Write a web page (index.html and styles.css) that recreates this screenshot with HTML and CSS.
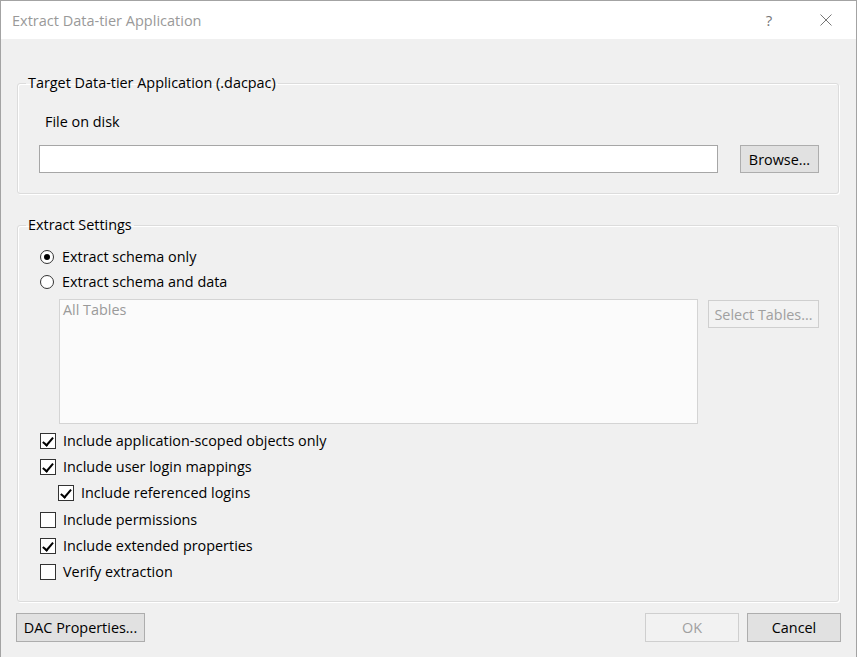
FILE: index.html
```html
<!DOCTYPE html>
<html lang="en">
<head>
  <meta charset="UTF-8">
  <title>Extract Data-tier Application</title>
  <link rel="stylesheet" href="styles.css">
</head>
<body>

<div class="dialog">
  <div class="titlebar">
    <span class="title">Extract Data-tier Application</span>
    <span class="caption-btn help">?</span>
    <span class="caption-btn close">
      <svg width="12" height="12" viewBox="0 0 12 12"><path d="M0.5 0.5 L11.5 11.5 M11.5 0.5 L0.5 11.5" stroke="#777" stroke-width="1" fill="none"/></svg>
    </span>
  </div>

  <div class="content">
    <!-- файл -->
    <fieldset class="group target">
      <legend>Target Data-tier Application (.dacpac)</legend>
      <div class="field-label">File on disk</div>
      <div class="file-row">
        <div class="textbox"></div>
        <button type="button" class="btn browse">Browse...</button>
      </div>
    </fieldset>

    <!-- настройки -->
    <fieldset class="group settings">
      <legend>Extract Settings</legend>
      <label class="row"><span class="radio checked"></span>Extract schema only</label>
      <label class="row"><span class="radio"></span>Extract schema and data</label>
      <div class="tables-row">
        <div class="listbox">All Tables</div>
        <button type="button" class="btn select-tables" disabled>Select Tables...</button>
      </div>
      <div class="checks">
        <label class="row"><span class="check on"></span>Include application-scoped objects only</label>
        <label class="row"><span class="check on"></span>Include user login mappings</label>
        <label class="row sub"><span class="check on"></span>Include referenced logins</label>
        <label class="row"><span class="check"></span>Include permissions</label>
        <label class="row"><span class="check on"></span>Include extended properties</label>
        <label class="row"><span class="check"></span>Verify extraction</label>
      </div>
    </fieldset>

    <div class="footer">
      <button type="button" class="btn dac">DAC Properties...</button>
      <span class="spacer"></span>
      <button type="button" class="btn ok" disabled>OK</button>
      <button type="button" class="btn cancel">Cancel</button>
    </div>
  </div>
</div>

</body>
</html>
```

FILE: styles.css
```css
* {
  box-sizing: border-box;
}
body {
  margin: 0;
  font-family: "Open Sans", "Noto Sans", sans-serif;
  font-size: 14.4px;
  color: #000;
  background: #f0f0f0;
}
.dialog {
  width: 857px;
  height: 657px;
  border: 1px solid #a3a3a3;
  border-bottom: none;
  background: #f0f0f0;
}
.titlebar {
  height: 38px;
  background: #fff;
  display: flex;
  align-items: center;
  padding-left: 11px;
}
.title {
  flex: 1;
  color: #999;
  font-size: 14.5px;
}
.caption-btn {
  width: 46px;
  height: 38px;
  display: flex;
  align-items: center;
  justify-content: center;
}
.help {
  color: #777;
  font-size: 15px;
  margin-right: 11px;
}
.close {
  margin-right: 7px;
}
.content {
  padding: 34px 17px 0 16px;
}
.group {
  margin: 0;
  border: 1px solid #dcdcdc;
  border-radius: 3px;
  box-shadow: inset 1px 1px 0 #fff, 1px 1px 0 #fff;
  min-width: 0;
}
.group legend {
  padding: 0 2px;
  font-size: 14.4px;
  line-height: 20px;
}
.target {
  padding: 19px 19px 20px 21px;
}
.target legend {
  margin-left: -13px;
}
.field-label {
  margin-left: 6px;
  line-height: 20px;
}
.file-row {
  display: flex;
  gap: 22px;
  margin-top: 13px;
}
.textbox {
  flex: 1;
  height: 28px;
  background: #fff;
  border: 1px solid #a6a6a6;
}
.btn {
  font-family: inherit;
  font-size: 14.4px;
  color: #000;
  background: #e1e1e1;
  border: 1px solid #adadad;
  padding: 0;
  height: 28px;
}
.btn:disabled {
  color: #a0a0a0;
  background: #f2f2f2;
  border-color: #cfcfcf;
}
.browse {
  width: 79px;
}
.settings {
  margin-top: 21px;
  padding: 9px 19px 16px 22px;
}
.settings legend {
  margin-left: -14px;
}
.row {
  display: flex;
  align-items: center;
  height: 25px;
  line-height: 20px;
}
.radio {
  width: 14px;
  height: 14px;
  border: 1px solid #333;
  border-radius: 50%;
  background: #fff;
  margin-right: 8px;
  display: flex;
  align-items: center;
  justify-content: center;
}
.radio.checked::after {
  content: "";
  width: 6px;
  height: 6px;
  border-radius: 50%;
  background: #000;
}
.tables-row {
  display: flex;
  align-items: flex-start;
  gap: 10px;
  margin-top: 5px;
  padding-left: 19px;
}
.listbox {
  flex: 1;
  height: 125px;
  background: #fbfbfb;
  border: 1px solid #d4d4d4;
  color: #9a9a9a;
  padding: 0 3px;
  line-height: 20px;
}
.select-tables {
  width: 111px;
  margin-top: 1px;
}
.checks {
  margin-top: 4px;
}
.checks .row {
  height: 26.2px;
}
.check {
  width: 16px;
  height: 16px;
  border: 1px solid #333;
  background: #fff;
  margin-right: 7px;
  position: relative;
}
.check.on::after {
  content: "";
  position: absolute;
  left: 4px;
  top: 1px;
  width: 4px;
  height: 9px;
  border: solid #000;
  border-width: 0 2px 2px 0;
  transform: rotate(40deg);
}
.row.sub {
  padding-left: 18px;
}
.footer {
  display: flex;
  gap: 8px;
  margin: 11px -2px 0 -1px;
}
.footer .btn {
  height: 29px;
}
.dac {
  width: 129px;
}
.spacer {
  flex: 1;
}
.ok,
.cancel {
  width: 94px;
}
```
